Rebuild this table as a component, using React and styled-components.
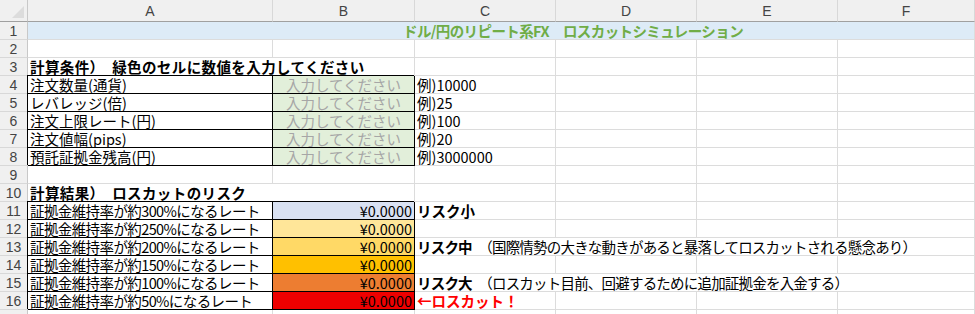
import styled, { createGlobalStyle } from 'styled-components';

const GlobalStyle = createGlobalStyle`
  html, body {
    margin: 0;
    padding: 0;
    background: #fff;
    overflow: hidden;
  }
`;

const Sheet = styled.div`
  display: grid;
  grid-template-columns: 28px 245px 142px 141px 141px 141px 1fr;
  grid-template-rows: 22px repeat(17, 18px);
  width: 975px;
  height: 314px;
  overflow: hidden;
  font-family: 'Noto Sans CJK JP', 'Noto Sans', sans-serif;
  color: #000;
`;

const Corner = styled.div`
  background: #f0f0f0;
  border-right: 1px solid #c8c8c8;
  border-bottom: 1px solid #a0a0a0;
  display: flex;
  align-items: flex-end;
  justify-content: flex-end;
  padding: 0 3px 3px 0;
  box-sizing: border-box;

  &::after {
    content: '';
    width: 0;
    height: 0;
    border-left: 12px solid transparent;
    border-bottom: 12px solid #dcdcdc;
  }
`;

const ColHead = styled.div`
  background: #f0f0f0;
  border-right: 1px solid #d8d8d8;
  border-bottom: 1px solid #a0a0a0;
  box-sizing: border-box;
  display: flex;
  align-items: center;
  justify-content: center;
  font-family: 'Liberation Sans', Arial, sans-serif;
  font-size: 14px;
  color: #444;
`;

const RowHead = styled.div`
  background: #f0f0f0;
  border-right: 1px solid #c8c8c8;
  border-bottom: 1px solid #d8d8d8;
  box-sizing: border-box;
  display: flex;
  align-items: center;
  justify-content: center;
  font-family: 'Liberation Sans', Arial, sans-serif;
  font-size: 14px;
  color: #444;
`;

const Cell = styled.div`
  grid-column: span ${p => p.$span || 1};
  background: ${p => p.$bg || '#fff'};
  border-right: 1px solid ${p => (p.$boxed ? '#000' : '#dcdcdc')};
  border-bottom: 1px solid ${p => (p.$boxed ? '#000' : '#dcdcdc')};
  box-shadow: ${p => (p.$boxed ? '-1px -1px 0 #000' : 'none')};
  box-sizing: border-box;
  padding: ${p => p.$pad || '0 2px'};
  font-size: 14.5px;
  line-height: 17px;
  letter-spacing: ${p => p.$tight || 0}px;
  font-weight: ${p => (p.$bold ? 700 : 400)};
  color: ${p => p.$color || '#000'};
  text-align: ${p => p.$align || 'left'};
  white-space: nowrap;
  overflow: hidden;
`;

const Strong = styled.span`
  font-weight: 700;
`;

const COLS = ['A', 'B', 'C', 'D', 'E', 'F'];

const inputs = [
  ['注文数量(通貨)', '例)10000'],
  ['レバレッジ(倍)', '例)25'],
  ['注文上限レート(円)', '例)100'],
  ['注文値幅(pips)', '例)20'],
  ['預託証拠金残高(円)', '例)3000000'],
];

const results = [
  { pct: '300%', bg: '#d9e1f2', note: <Strong>リスク小</Strong> },
  { pct: '250%', bg: '#ffe699' },
  {
    pct: '200%',
    bg: '#ffd966',
    span: 4,
    note: (
      <>
        <Strong>リスク中</Strong>　（国際情勢の大きな動きがあると暴落してロスカットされる懸念あり）
      </>
    ),
  },
  { pct: '150%', bg: '#ffc000' },
  {
    pct: '100%',
    bg: '#ed7d31',
    span: 4,
    note: (
      <>
        <Strong>リスク大</Strong>　（ロスカット目前、回避するために追加証拠金を入金する）
      </>
    ),
  },
  { pct: '50%', bg: '#ee0000', red: true, note: '←ロスカット！' },
];

const EmptyCells = ({ count }) =>
  Array.from({ length: count }, (_, i) => <Cell key={i} />);

const RowFragment = ({ head, children }) => (
  <>
    {head}
    {children}
  </>
);

const App = () => {
  let row = 0;
  const rh = () => <RowHead>{++row}</RowHead>;

  return (
    <>
      <GlobalStyle />
      <Sheet>
        <Corner />
        {COLS.map(c => (
          <ColHead key={c}>{c}</ColHead>
        ))}

        {rh()}
        <Cell $span={6} $bg='#ddebf7' $bold $tight={-0.6} $color='#70ad47' $pad='0 0 0 375px'>
          ドル/円のリピート系FX　ロスカットシミュレーション
        </Cell>

        {rh()}
        <EmptyCells count={6} />

        {rh()}
        <Cell $span={2} $bold $tight={0.4}>
          計算条件）　緑色のセルに数値を入力してください
        </Cell>
        <EmptyCells count={4} />

        {inputs.map(([label, example]) => (
          <RowFragment key={label} head={rh()}>
            <Cell $boxed>{label}</Cell>
            <Cell $boxed $bg='#e2efda' $color='#a6a6a6' $align='center'>
              入力してください
            </Cell>
            <Cell>{example}</Cell>
            <EmptyCells count={3} />
          </RowFragment>
        ))}

        {rh()}
        <EmptyCells count={6} />

        {rh()}
        <Cell $span={2} $bold $tight={0.4}>
          計算結果）　ロスカットのリスク
        </Cell>
        <EmptyCells count={4} />

        {results.map(r => (
          <RowFragment key={r.pct} head={rh()}>
            <Cell $boxed $tight={-0.6}>
              証拠金維持率が約{r.pct}になるレート
            </Cell>
            <Cell $boxed $bg={r.bg} $align='right'>
              ¥0.0000
            </Cell>
            <Cell
              $span={r.span || 1}
              $tight={r.span ? -0.8 : 0}
              $bold={r.red}
              $color={r.red ? '#ff0000' : '#000'}
            >
              {r.note}
            </Cell>
            <EmptyCells count={4 - (r.span || 1)} />
          </RowFragment>
        ))}

        {rh()}
        <EmptyCells count={6} />
      </Sheet>
    </>
  );
};

export default App;
